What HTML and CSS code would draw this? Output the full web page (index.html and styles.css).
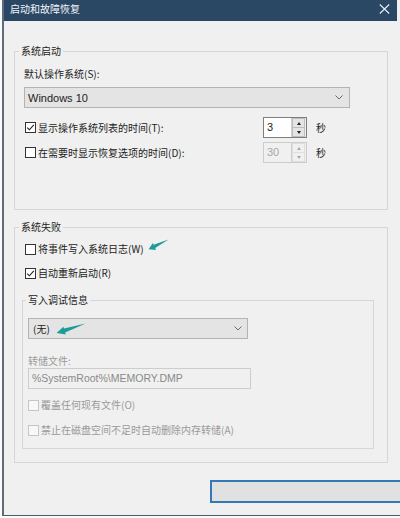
FILE: index.html
```html
<!DOCTYPE html>
<html lang="zh-CN">
<head>
<meta charset="utf-8">
<title>启动和故障恢复</title>
<link rel="stylesheet" href="styles.css">
</head>
<body>
<div class="window">
  <div class="titlebar">
    <span class="title">启动和故障恢复</span>
    <svg class="close" width="11" height="10" viewBox="0 0 11 10"><path d="M0.8 0.5 L10.2 9.5 M10.2 0.5 L0.8 9.5" stroke="#e8eef4" stroke-width="1.1" fill="none"/></svg>
  </div>
  <div class="body">
    <fieldset class="group g1">
      <legend>系统启动</legend>
      <div class="gbody g1body">
        <div class="label">默认操作系统(S):</div>
        <div class="combo combo-wide">
          <span class="combo-text latin">Windows 10</span>
          <svg class="chev" width="8" height="5" viewBox="0 0 8 5"><path d="M0.5 0.5 L4 4 L7.5 0.5" stroke="#6a6a6a" stroke-width="1" fill="none"/></svg>
        </div>
        <div class="timerow">
          <div class="check tlabel"><span class="box"><svg width="9" height="9" viewBox="0 0 9 9"><path d="M1.2 4.6 L3.4 6.8 L7.8 1.8" stroke="#222" stroke-width="1.1" fill="none"/></svg></span>显示操作系统列表的时间(T):</div>
          <div class="spin">
            <span class="spin-val latin">3</span>
            <span class="spin-btns"><span class="sb"><i class="tri up"></i></span><span class="sb"><i class="tri down"></i></span></span>
          </div>
          <span class="unit">秒</span>
        </div>
        <div class="timerow row2">
          <div class="check tlabel"><span class="box"></span>在需要时显示恢复选项的时间(D):</div>
          <div class="spin spin-off">
            <span class="spin-val latin">30</span>
            <span class="spin-btns"><span class="sb"><i class="tri up"></i></span><span class="sb"><i class="tri down"></i></span></span>
          </div>
          <span class="unit">秒</span>
        </div>
      </div>
    </fieldset>

    <fieldset class="group g2">
      <legend>系统失败</legend>
      <div class="gbody g2body">
        <div class="check crow first"><span class="box"></span>将事件写入系统日志(W)</div>
        <div class="check crow second"><span class="box"><svg width="9" height="9" viewBox="0 0 9 9"><path d="M1.2 4.6 L3.4 6.8 L7.8 1.8" stroke="#222" stroke-width="1.1" fill="none"/></svg></span>自动重新启动(R)</div>

        <fieldset class="group g3">
          <legend>写入调试信息</legend>
          <div class="gbody g3body">
            <div class="combo combo-small">
              <span class="combo-text">(无)</span>
              <svg class="chev" width="8" height="5" viewBox="0 0 8 5"><path d="M0.5 0.5 L4 4 L7.5 0.5" stroke="#6a6a6a" stroke-width="1" fill="none"/></svg>
            </div>
            <div class="label dim dumplabel">转储文件:</div>
            <div class="textbox latin">%SystemRoot%\MEMORY.DMP</div>
            <div class="check crow dim off1"><span class="box boxoff"></span>覆盖任何现有文件(O)</div>
            <div class="check crow dim off2"><span class="box boxoff"></span>禁止在磁盘空间不足时自动删除内存转储(A)</div>
          </div>
        </fieldset>
      </div>
    </fieldset>

    <div class="button"></div>
  </div>

  <svg class="arrow arrow1" width="21" height="12" viewBox="0 0 21 12"><polygon points="0.6,10.2 4.9,4.1 5.6,5.8 20.6,0.6 7.2,9.1 8,10.9" fill="#1c9d9a"/></svg>
  <svg class="arrow arrow2" width="30" height="13" viewBox="0 0 30 13"><polygon points="0.6,11 7.4,4.7 8,6.6 29.6,1.4 9.2,10.5 9.8,12.6" fill="#1c9d9a"/></svg>
</div>
</body>
</html>
```

FILE: styles.css
```css
html, body {
  margin: 0;
  padding: 0;
}
body {
  background: #fbfbfb;
  width: 400px;
  height: 518px;
  overflow: hidden;
  font-family: "Noto Sans CJK SC", "Noto Sans", sans-serif;
  font-size: 10px;
  color: #222;
}
.latin {
  font-family: "Liberation Sans", "Noto Sans CJK SC", sans-serif;
}
.window {
  position: relative;
  margin-left: 2px;
  width: 396px;
  border-left: 2px solid #5d6c7a;
  border-bottom: 1px solid #4b5b6a;
  background: #f0f0f0;
  overflow: hidden;
}
.titlebar {
  height: 21px;
  margin-right: 3px;
  background: #2a4764;
  display: flex;
  align-items: flex-start;
  justify-content: space-between;
  padding: 0 7px 0 6px;
  box-sizing: border-box;
}
.title {
  color: #f2f5f8;
  font-size: 10px;
  line-height: 18px;
}
.close {
  margin-top: 4px;
}
.body {
  padding: 24px 0 12px 10px;
}
.group {
  margin: 0;
  padding: 0;
  border: 1px solid #d6d6d6;
  box-sizing: border-box;
  min-width: 0;
}
.group legend {
  margin-left: 4px;
  padding: 0 2px;
  font-size: 10px;
  line-height: 12px;
  color: #222;
}
.g1 {
  width: 374px;
}
.g2 {
  width: 374px;
  margin-top: 11px;
}
.g3 {
  width: 352px;
  margin-left: -2px;
  margin-top: 14px;
}
.g3 legend {
  margin-left: 3px;
}
.gbody {
  display: flex;
  flex-direction: column;
  align-items: flex-start;
}
.g1body {
  padding: 10px 0 46px 9px;
}
.g2body {
  padding: 9px 0 13px 9px;
}
.g3body {
  padding: 12px 0 11px 5px;
}
.label {
  line-height: 14px;
}
.dim {
  color: #9a9a9a;
}
.combo {
  height: 21px;
  box-sizing: border-box;
  border: 1px solid #b3b3b3;
  background: #e4e4e4;
  display: flex;
  align-items: center;
  justify-content: space-between;
  padding: 0 6px 0 3px;
}
.combo-wide {
  width: 326px;
  margin-top: 6px;
}
.combo-text.latin {
  font-size: 11px;
}
.combo-small {
  width: 220px;
  padding-right: 5px;
}
.combo-small .combo-text {
  font-size: 10px;
  padding-left: 1px;
}
.timerow {
  display: flex;
  align-items: center;
  height: 21px;
  margin-top: 9px;
}
.timerow.row2 {
  margin-top: 4px;
}
.check {
  display: flex;
  align-items: center;
  line-height: 14px;
}
.tlabel {
  width: 238px;
  margin-left: 1px;
}
.box {
  width: 11px;
  height: 11px;
  box-sizing: border-box;
  border: 1px solid #333;
  background: #fff;
  margin-right: 2px;
  display: flex;
  align-items: center;
  justify-content: center;
  flex: none;
}
.box svg {
  display: block;
}
.boxoff {
  border-color: #c6c6c6;
  background: #f8f8f8;
}
.crow {
  height: 14px;
}
.crow.first, .crow.second {
  margin-left: 1px;
}
.crow.second {
  margin-top: 10px;
}
.spin {
  width: 44px;
  height: 21px;
  box-sizing: border-box;
  border: 1px solid #7d7d7d;
  display: flex;
}
.spin-val {
  flex: 1;
  background: #fff;
  font-size: 11px;
  line-height: 19px;
  padding-left: 3px;
  color: #222;
}
.spin-btns {
  width: 14px;
  display: flex;
  flex-direction: column;
  border-left: 1px solid #cfcfcf;
  background: #f0f0f0;
}
.sb {
  flex: 1;
  display: flex;
  align-items: center;
  justify-content: center;
  background: #e4e4e4;
  border: 1px solid #bdbdbd;
  margin: 0 1px 0 0;
}
.sb + .sb {
  border-top: none;
}
.tri {
  width: 0;
  height: 0;
  border-left: 2.5px solid transparent;
  border-right: 2.5px solid transparent;
}
.tri.up {
  border-bottom: 3px solid #222;
}
.tri.down {
  border-top: 3px solid #222;
}
.spin-off {
  border-color: #cccccc;
}
.spin-off .spin-val {
  background: #f0f0f0;
  color: #a8a8a8;
}
.spin-off .sb {
  background: #f0f0f0;
  border-color: #dedede;
}
.spin-off .tri.up {
  border-bottom-color: #a8a8a8;
}
.spin-off .tri.down {
  border-top-color: #a8a8a8;
}
.unit {
  margin-left: 9px;
}
.dumplabel {
  margin-top: 16px;
  line-height: 12px;
}
.textbox {
  margin-top: 1px;
  width: 223px;
  height: 21px;
  box-sizing: border-box;
  border: 1px solid #cdcdcd;
  background: #f0f0f0;
  color: #8a8a8a;
  font-size: 10.5px;
  line-height: 19px;
  padding-left: 3px;
  white-space: nowrap;
}
.off1 {
  margin-top: 9px;
}
.off2 {
  margin-top: 11px;
}
.button {
  margin-top: 17px;
  margin-left: 196px;
  width: 260px;
  height: 23px;
  box-sizing: border-box;
  border: 2px solid #3479b6;
  background: #e1e1e1;
}
.arrow {
  position: absolute;
  display: block;
}
.arrow1 {
  left: 144px;
  top: 239px;
}
.arrow2 {
  left: 52px;
  top: 322px;
}
```
